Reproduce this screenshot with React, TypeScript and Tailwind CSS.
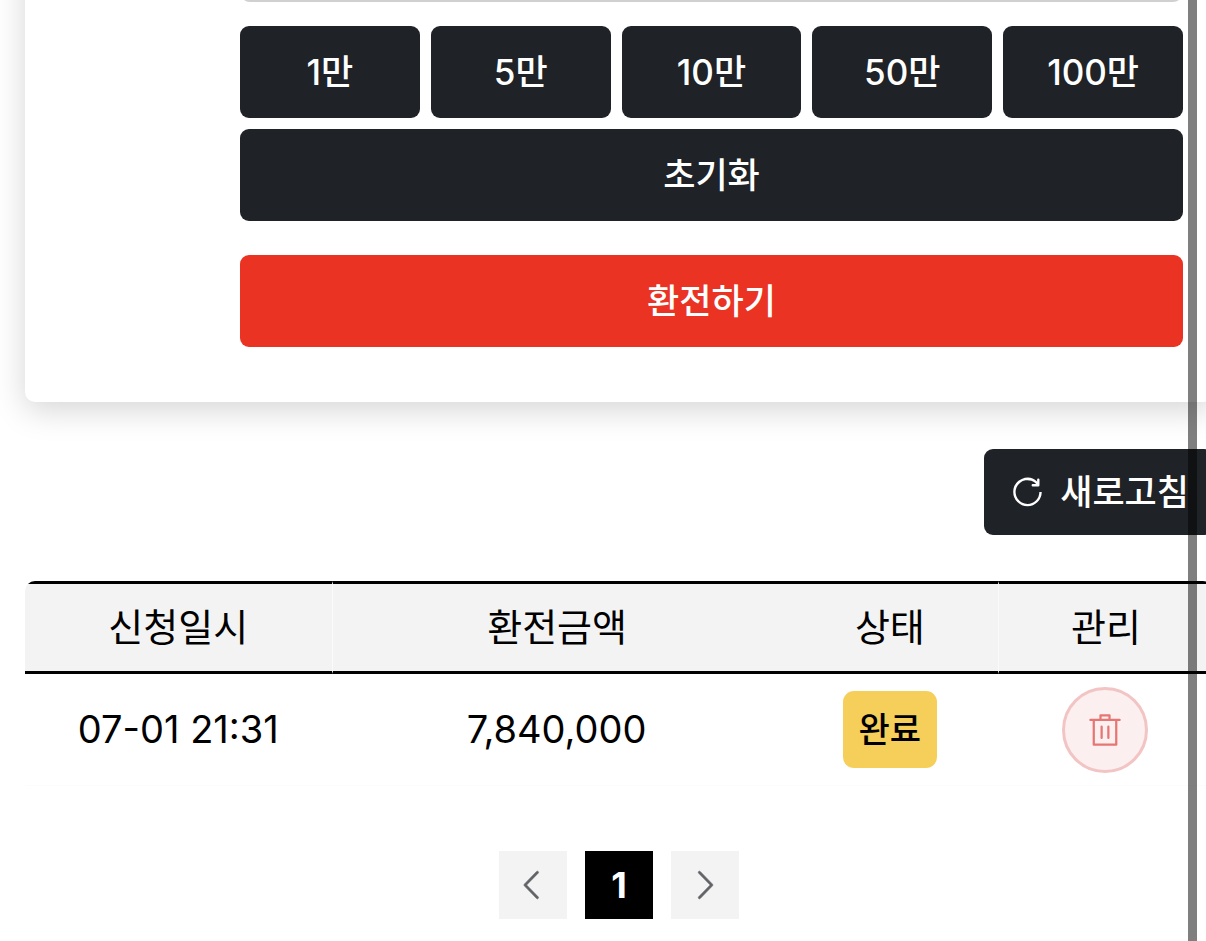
import React from "react";

const amounts = ["1만", "5만", "10만", "50만", "100만"];

const rows = [{ date: "07-01 21:31", amount: "7,840,000", status: "완료" }];

function Icon({ d, className }: { d: string; className: string }) {
  return (
    <svg viewBox="0 0 1024 1024" fill="currentColor" aria-hidden="true" className={className}>
      <path d={d} />
    </svg>
  );
}

const refreshPath =
  "M784.512 230.272v-50.56a32 32 0 1 1 64 0v149.056a32 32 0 0 1-32 32H667.52a32 32 0 1 1 0-64h92.992A320 320 0 1 0 524.8 833.152a320 320 0 0 0 320-320h64a384 384 0 0 1-384 384 384 384 0 0 1-384-384 384 384 0 0 1 643.712-282.88z";
const deletePath =
  "M160 256H96a32 32 0 0 1 0-64h256V95.936a32 32 0 0 1 32-32h256a32 32 0 0 1 32 32V192h256a32 32 0 1 1 0 64h-64v672a32 32 0 0 1-32 32H192a32 32 0 0 1-32-32V256zm448-64v-64H416v64h192zM224 896h576V256H224v640zm192-128a32 32 0 0 1-32-32V416a32 32 0 0 1 64 0v320a32 32 0 0 1-32 32zm192 0a32 32 0 0 1-32-32V416a32 32 0 0 1 64 0v320a32 32 0 0 1-32 32z";
const leftPath =
  "M609.408 149.376 277.76 489.6a32 32 0 0 0 0 44.672l331.648 340.352a29.12 29.12 0 0 0 41.728 0 30.592 30.592 0 0 0 0-42.752L339.264 511.936l311.872-319.872a30.592 30.592 0 0 0 0-42.688 29.12 29.12 0 0 0-41.728 0z";
const rightPath =
  "M340.864 149.312a30.592 30.592 0 0 0 0 42.752L652.736 512 340.864 831.872a30.592 30.592 0 0 0 0 42.752 29.12 29.12 0 0 0 41.728 0L714.24 534.336a32 32 0 0 0 0-44.672L382.592 149.376a29.12 29.12 0 0 0-41.728 0z";

function WithdrawForm() {
  return (
    <form
      onSubmit={(e) => e.preventDefault()}
      className="rounded-[10px] bg-white pr-[30px] pb-[55px] pl-[215px] shadow-[0_8px_32px_rgba(0,0,0,0.17)]"
    >
      <input
        type="text"
        aria-label="환전금액"
        className="block h-[92px] w-full rounded-[10px] border-2 border-[#d0d0d0] bg-white px-6"
      />
      <div className="mt-6 grid grid-cols-5 gap-[11px] text-[35px] font-medium text-white">
        {amounts.map((a) => (
          <button key={a} type="button" className="h-[92px] rounded-[9px] bg-[#1f2226]">
            {a}
          </button>
        ))}
        <button type="button" className="col-span-5 h-[92px] rounded-[9px] bg-[#1f2226]">
          초기화
        </button>
      </div>
      <button
        type="submit"
        className="mt-[34px] h-[92px] w-full rounded-[9px] bg-[#ea3323] text-[35px] font-medium text-white"
      >
        환전하기
      </button>
    </form>
  );
}

function HistoryTable() {
  const th = "h-[93px] border-y-[3px] border-black bg-[#f3f3f3] p-0 font-normal";
  return (
    <div className="mt-[46px] overflow-hidden rounded-t-[10px]">
      <table className="w-full table-fixed border-separate border-spacing-0 text-center text-[38px] text-black">
        <colgroup>
          <col className="w-[25.8%]" />
          <col className="w-[37.9%]" />
          <col className="w-[18.2%]" />
          <col className="w-[18.1%]" />
        </colgroup>
        <thead>
          <tr>
            <th className={th}>신청일시</th>
            <th className={`${th} border-l border-l-[#fafafa]`}>환전금액</th>
            <th className={th}>상태</th>
            <th className={`${th} border-l border-l-[#fafafa]`}>관리</th>
          </tr>
        </thead>
        <tbody>
          {rows.map((r) => (
            <tr key={r.date}>
              <td className="h-[112px] border-b border-[#fcfcfc] p-0">{r.date}</td>
              <td className="border-b border-[#fcfcfc] p-0">{r.amount}</td>
              <td className="border-b border-[#fcfcfc] p-0">
                <div className="flex justify-center">
                  <span className="flex h-[77px] items-center rounded-[11px] bg-[#f6ce5a] px-4 text-[34px] font-medium">
                    {r.status}
                  </span>
                </div>
              </td>
              <td className="border-b border-[#fcfcfc] p-0">
                <div className="flex justify-center">
                  <button
                    type="button"
                    aria-label="삭제"
                    className="flex size-[86px] items-center justify-center rounded-full border-[3px] border-[#f2c4c4] bg-[#fcefef] text-[#e57673]"
                  >
                    <Icon d={deletePath} className="size-9" />
                  </button>
                </div>
              </td>
            </tr>
          ))}
        </tbody>
      </table>
    </div>
  );
}

function Pagination() {
  return (
    <nav className="mt-[65px] flex justify-center gap-[18px] pb-[22px]">
      <button type="button" aria-label="이전" className="flex size-[68px] items-center justify-center bg-[#f3f3f3] text-[#606266]">
        <Icon d={leftPath} className="size-[38px] stroke-current stroke-[18]" />
      </button>
      <button type="button" aria-current="page" className="size-[68px] bg-black text-[36px] font-bold text-white">
        1
      </button>
      <button type="button" aria-label="다음" className="flex size-[68px] items-center justify-center bg-[#f3f3f3] text-[#606266]">
        <Icon d={rightPath} className="size-[38px] stroke-current stroke-[18]" />
      </button>
    </nav>
  );
}

export default function App() {
  return (
    <div className="relative min-h-screen overflow-hidden bg-white font-['Inter','Noto_Sans_CJK_KR',sans-serif]">
      <main className="-mt-[90px] -mr-[7px] ml-[25px]">
        <WithdrawForm />
        <div className="mt-[47px] flex justify-end">
          <button
            type="button"
            className="flex h-[86px] items-center gap-[14px] rounded-[9px] bg-[#1f2226] px-6 text-[35px] font-medium text-white"
          >
            <Icon d={refreshPath} className="size-[38px]" />
            새로고침
          </button>
        </div>
        <HistoryTable />
        <Pagination />
      </main>
      <div className="absolute inset-y-0 right-[9px] w-[9px] bg-black/50" />
    </div>
  );
}
